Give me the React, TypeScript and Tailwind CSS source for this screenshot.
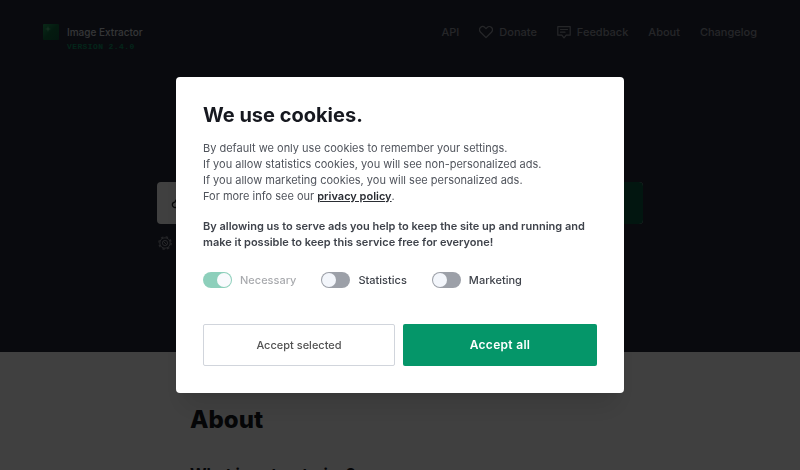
import { useState } from "react";

function LogoMark() {
  return (
    <svg width="16" height="16" viewBox="0 0 16 16" aria-hidden="true">
      <defs>
        <linearGradient id="logo-fill" x1="0" y1="0" x2="1" y2="1">
          <stop offset="0" stopColor="#27a35f" />
          <stop offset="0.5" stopColor="#10693f" />
          <stop offset="1" stopColor="#0f5b3b" />
        </linearGradient>
      </defs>
      <rect width="16" height="16" rx="1" fill="url(#logo-fill)" />
      <path d="M5 2l.8 2.200L8 5l-2.200.8L5 8l-.8-2.200L2 5l2.200-.8z" fill="#7be0a0" opacity="0.6" />
    </svg>
  );
}

function HeartIcon() {
  return (
    <svg width="14" height="14" viewBox="0 0 14 14" fill="none" stroke="currentColor" strokeWidth="1.300" strokeLinejoin="round" aria-hidden="true">
      <path d="M7 12.600 1.600 7.200C.3 5.800.3 3.700 1.500 2.500s3.200-1.200 4.500.1l1 1 1-1c1.300-1.300 3.300-1.300 4.500-.1s1.200 3.300-.1 4.700z" />
    </svg>
  );
}

function FeedbackIcon() {
  return (
    <svg width="14" height="14" viewBox="0 0 14 14" fill="none" stroke="currentColor" strokeWidth="1.200" strokeLinecap="round" strokeLinejoin="round" aria-hidden="true">
      <path d="M.8 1.600h12.400v8.600H9.200L7 12.800l-2.200-2.600h-4zM3.500 4.500h7M3.500 7.200h4.500" />
    </svg>
  );
}

function GearIcon() {
  return (
    <svg width="14" height="14" viewBox="0 0 14 14" fill="none" stroke="currentColor" aria-hidden="true">
      <circle cx="7" cy="7" r="5.200" />
      <circle cx="7" cy="7" r="6.200" strokeWidth="1.200" strokeDasharray="2.400 2.470" />
      <circle cx="7" cy="7" r="2.600" />
      <path d="m5.200 5.200 3.600 3.600" />
    </svg>
  );
}

function LinkIcon() {
  return (
    <svg width="16" height="16" viewBox="0 0 16 16" fill="none" stroke="currentColor" strokeWidth="1.300" strokeLinecap="round" aria-hidden="true">
      <path d="M5.500 12.500H4.200a2.700 2.700 0 0 1-.3-5.400 4.200 4.200 0 0 1 8.100.4 2.500 2.500 0 0 1 0 5h-1.500" />
    </svg>
  );
}

function Page() {
  return (
    <div className="bg-white text-[#16181f]">
      <div className="flex h-88 flex-col bg-[#262a38]">
        <header className="flex items-start justify-between px-[43px] pt-6">
          <div className="flex items-start gap-2">
            <LogoMark />
            <div>
              <div className="text-[10px] leading-4 font-medium text-gray-300">Image Extractor</div>
              <div className="font-['Liberation_Mono',monospace] text-[8px] leading-3.5 font-bold tracking-wider text-[#0d9467]">VERSION 2.4.0</div>
            </div>
          </div>
          <nav className="flex items-center gap-5 text-[11px] leading-4 font-medium text-[#9496a1]">
            <a href="#api">API</a>
            <a href="#donate" className="flex items-center gap-1.5"><HeartIcon />Donate</a>
            <a href="#feedback" className="flex items-center gap-1.5"><FeedbackIcon />Feedback</a>
            <a href="#about">About</a>
            <a href="#changelog">Changelog</a>
          </nav>
        </header>
        <div className="mx-auto mt-32 w-full max-w-[486px]">
          <form className="flex h-10.5 overflow-hidden rounded-sm bg-white">
            <label htmlFor="site-url" className="flex items-center pl-3.5"><LinkIcon /></label>
            <input id="site-url" className="min-w-0 flex-1 px-2 text-xs outline-none" />
            <button type="button" className="w-24 bg-[#0b5a41] text-xs font-semibold text-white">Extract</button>
          </form>
          <button type="button" aria-label="Options" className="mt-3 ml-px block text-[#9496a1]"><GearIcon /></button>
        </div>
      </div>
      <main className="mx-auto w-full max-w-[420px] pt-[50px]">
        <h1 className="text-2xl leading-9 font-extrabold">About</h1>
        <h2 className="mt-6 text-base leading-6 font-bold">What is extract.pics?</h2>
      </main>
    </div>
  );
}

function Toggle({ label, checked, disabled, onChange }: { label: string; checked: boolean; disabled?: boolean; onChange?: () => void }) {
  return (
    <label className={disabled ? "flex items-center gap-2 opacity-45" : "flex items-center gap-2"}>
      <span className="flex">
        <input type="checkbox" role="switch" className="peer sr-only" checked={checked} disabled={disabled} onChange={() => onChange?.()} />
        <span className="flex h-4 w-[29px] items-center rounded-full bg-[#9ca0a8] p-px peer-checked:justify-end peer-checked:bg-[#059669]">
          <span className="size-3.5 rounded-full bg-[#f3f6fb]" />
        </span>
      </span>
      <span className="text-[11px] leading-4 font-medium text-[#3f434b]">{label}</span>
    </label>
  );
}

function CookieDialog() {
  const [statistics, setStatistics] = useState(false);
  const [marketing, setMarketing] = useState(false);
  return (
    <div className="fixed inset-0 flex items-center justify-center bg-black/75">
      <div role="dialog" aria-modal="true" aria-labelledby="cookie-title" className="w-full max-w-md rounded bg-white px-[27px] pt-6 pb-[27px] shadow-xl">
        <h2 id="cookie-title" className="text-xl leading-7 font-bold text-[#16181f]">We use cookies.</h2>
        <p className="mt-[11px] text-[11px] leading-4 text-[#50545c]">
          By default we only use cookies to remember your settings.<br />
          If you allow statistics cookies, you will see non-personalized ads.<br />
          If you allow marketing cookies, you will see personalized ads.<br />
          For more info see our <a href="#privacy" className="font-semibold text-[#2a2d33] underline">privacy policy</a>.
        </p>
        <p className="mt-3.5 text-[11px] leading-4 font-semibold text-[#3f434b]">
          By allowing us to serve ads you help to keep the site up and running and make it possible to keep this service free for everyone!
        </p>
        <div className="mt-[22px] flex gap-[25px]">
          <Toggle label="Necessary" checked disabled />
          <Toggle label="Statistics" checked={statistics} onChange={() => setStatistics(!statistics)} />
          <Toggle label="Marketing" checked={marketing} onChange={() => setMarketing(!marketing)} />
        </div>
        <div className="mt-9 grid grid-cols-[192fr_194fr] gap-2">
          <button type="button" className="h-[42px] rounded-xs border border-gray-300 text-[11px] font-medium text-neutral-600">Accept selected</button>
          <button type="button" className="h-[42px] rounded-xs bg-[#059669] text-xs font-semibold tracking-wide text-white">Accept all</button>
        </div>
      </div>
    </div>
  );
}

export default function App() {
  return (
    <div className="h-screen overflow-hidden font-[Inter,sans-serif]">
      <Page />
      <CookieDialog />
    </div>
  );
}
